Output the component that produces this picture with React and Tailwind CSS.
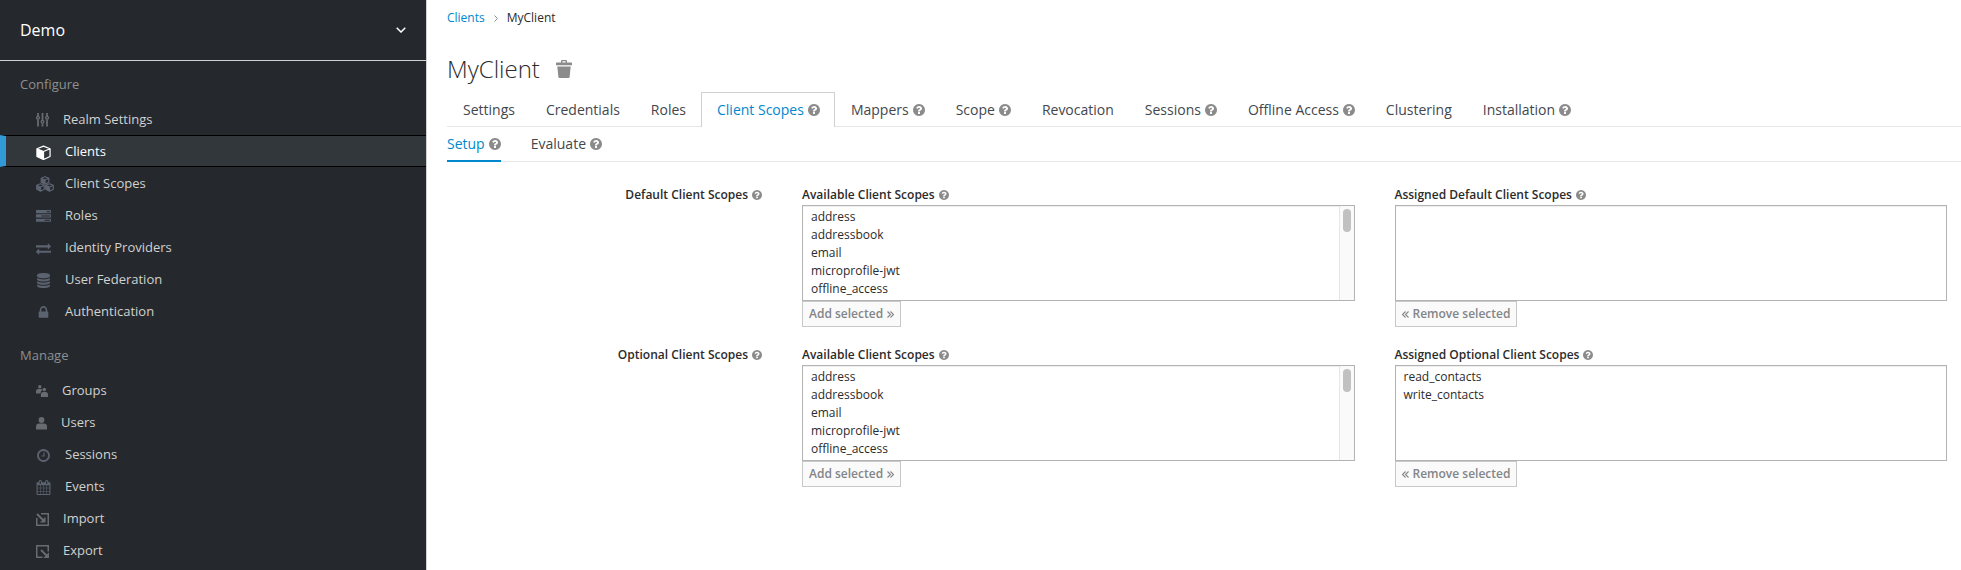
import React, { useState } from "react";

const paths = {
  lock: "M640 768h512v-192q0-106-75-181t-181-75-181 75-75 181v192zm832 96v576q0 40-28 68t-68 28h-960q-40 0-68-28t-28-68v-576q0-40 28-68t68-28h32v-192q0-184 132-316t316-132 316 132 132 316v192h32q40 0 68 28t28 68z",
  question:
    "M1024 1376v-192q0-14-9-23t-23-9h-192q-14 0-23 9t-9 23v192q0 14 9 23t23 9h192q14 0 23-9t9-23zm256-672q0-88-55.5-163t-138.5-116-170-41q-243 0-371 213-15 24 8 42l132 100q7 6 19 6 16 0 25-12 53-68 86-92 34-24 86-24 48 0 85.5 26t37.5 59q0 38-20 61t-68 45q-63 28-115.5 86.5t-52.5 125.5v36q0 14 9 23t23 9h192q14 0 23-9t9-23q0-19 21.5-49.5t54.5-49.5q32-18 49-28.5t46-35 44.5-48 28-60.5 12.5-81zm384 192q0 209-103 385.5t-279.5 279.5-385.5 103-385.5-103-279.5-279.5-103-385.5 103-385.5 279.5-279.5 385.5-103 385.5 103 279.5 279.5 103 385.5z",
  database:
    "M896 768q237 0 443-43t325-127v170q0 69-103 128t-280 93.5-385 34.5-385-34.5-280-93.5-103-128v-170q119 84 325 127t443 43zm0 768q237 0 443-43t325-127v170q0 69-103 128t-280 93.5-385 34.5-385-34.5-280-93.5-103-128v-170q119 84 325 127t443 43zm0-384q237 0 443-43t325-127v170q0 69-103 128t-280 93.5-385 34.5-385-34.5-280-93.5-103-128v-170q119 84 325 127t443 43zm0-1152q208 0 385 34.5t280 93.5 103 128v128q0 69-103 128t-280 93.5-385 34.5-385-34.5-280-93.5-103-128v-128q0-69 103-128t280-93.5 385-34.5z",
  clock:
    "M1024 544v448q0 14-9 23t-23 9h-320q-14 0-23-9t-9-23v-64q0-14 9-23t23-9h224v-352q0-14 9-23t23-9h64q14 0 23 9t9 23zm416 352q0-148-73-273t-198-198-273-73-273 73-198 198-73 273 73 273 198 198 273 73 273-73 198-198 73-273zm224 0q0 209-103 385.5t-279.5 279.5-385.5 103-385.5-103-279.5-279.5-103-385.5 103-385.5 279.5-279.5 385.5-103 385.5 103 279.5 279.5 103 385.5z",
  tasks:
    "M1024 1408h640v-128h-640v128zm-384-512h1024v-128h-1024v128zm640-512h384v-128h-384v128zm512 832v256q0 26-19 45t-45 19h-1664q-26 0-45-19t-19-45v-256q0-26 19-45t45-19h1664q26 0 45 19t19 45zm0-512v256q0 26-19 45t-45 19h-1664q-26 0-45-19t-19-45v-256q0-26 19-45t45-19h1664q26 0 45 19t19 45zm0-512v256q0 26-19 45t-45 19h-1664q-26 0-45-19t-19-45v-256q0-26 19-45t45-19h1664q26 0 45 19t19 45z",
  exchange:
    "M1792 1184v192q0 13-9.5 22.5t-22.5 9.5h-1376v192q0 13-9.5 22.5t-22.5 9.5q-12 0-24-10l-319-320q-9-9-9-22 0-14 9-23l320-320q9-9 23-9 13 0 22.5 9.5t9.5 22.5v192h1376q13 0 22.5 9.5t9.5 22.5zm0-544q0 14-9 23l-320 320q-9 9-23 9-13 0-22.5-9.5t-9.5-22.5v-192h-1376q-13 0-22.5-9.5t-9.5-22.5v-192q0-13 9.5-22.5t22.5-9.5h1376v-192q0-14 9-23t23-9q12 0 24 10l319 319q9 9 9 23z",
  calendar:
    "M192 1664h288v-288h-288v288zm352 0h320v-288h-320v288zm-352-352h288v-320h-288v320zm352 0h320v-320h-320v320zm-352-384h288v-288h-288v288zm736 736h320v-288h-320v288zm-384-736h320v-288h-320v288zm768 736h288v-288h-288v288zm-384-352h320v-320h-320v320zm-352-864v-288q0-13-9.5-22.5t-22.5-9.5h-64q-13 0-22.5 9.5t-9.5 22.5v288q0 13 9.5 22.5t22.5 9.5h64q13 0 22.5-9.5t9.5-22.5zm736 864h288v-320h-288v320zm-384-384h320v-288h-320v288zm384 0h288v-288h-288v288zm32-480v-288q0-13-9.5-22.5t-22.5-9.5h-64q-13 0-22.5 9.5t-9.5 22.5v288q0 13 9.5 22.5t22.5 9.5h64q13 0 22.5-9.5t9.5-22.5zm384-64v1280q0 52-38 90t-90 38h-1408q-52 0-90-38t-38-90v-1280q0-52 38-90t90-38h128v-96q0-66 47-113t113-47h64q66 0 113 47t47 113v96h384v-96q0-66 47-113t113-47h64q66 0 113 47t47 113v96h128q52 0 90 38t38 90z",
};

function Glyph({ name, className }) {
  return (
    <svg viewBox="0 0 1792 1792" fill="currentColor" className={className} aria-hidden="true">
      <path d={paths[name]} />
    </svg>
  );
}

function Help({ small }) {
  return (
    <svg
      viewBox="128 128 1536 1536"
      fill="currentColor"
      className={small ? "size-2.5 shrink-0 text-[#8b8b8b]" : "size-3 shrink-0 text-[#8b8b8b]"}
      aria-hidden="true"
    >
      <path d={paths.question} />
    </svg>
  );
}

function Cube() {
  return (
    <svg viewBox="0 0 16 16" className="size-[15px] shrink-0" aria-hidden="true">
      <path d="M1 4v8.200l7 3.300V7z" fill="currentColor" />
      <path d="M1 4l7-2.800L15 4v8.200l-7 3.300-7-3.300zM1 4l7 3 7-3M8 7v8.500" fill="none" stroke="currentColor" strokeWidth="1.300" strokeLinejoin="round" />
    </svg>
  );
}

function Cubes() {
  return (
    <svg viewBox="0 0 18 16" className="h-4 w-[18px] shrink-0" aria-hidden="true">
      {["translate(4.500 0)", "translate(0 7)", "translate(9 7)"].map((t) => (
        <g key={t} transform={t}>
          <path d="M.7 2.300v4l3.800 2v-4.300z" fill="currentColor" />
          <path d="M.7 2.300l3.800-1.600 3.800 1.600v4l-3.800 2-3.800-2zM.7 2.300l3.800 1.700 3.800-1.700M4.500 4v4.300" fill="none" stroke="currentColor" strokeWidth="1.200" strokeLinejoin="round" />
        </g>
      ))}
    </svg>
  );
}

function Sliders() {
  return (
    <svg viewBox="0 0 13 14" className="h-3.5 w-[13px]" fill="none" stroke="currentColor" strokeWidth="1.300" aria-hidden="true">
      <path d="M2 0v3.200M2 6.500v7M6.500 0v7.200M6.500 10.500v3M11 0v3.200M11 6.500v7" strokeWidth="1.800" />
      <circle cx="2" cy="4.800" r="1.400" />
      <circle cx="6.500" cy="8.800" r="1.400" />
      <circle cx="11" cy="4.800" r="1.400" />
    </svg>
  );
}

function Groups() {
  return (
    <svg viewBox="0 0 12 12" className="size-3" fill="currentColor" aria-hidden="true">
      <circle cx="3.800" cy="1.700" r="1.700" />
      <path d="M0 8.500V6.200Q0 4 2.200 4h2.600q1 0 1.600.7Q4.500 6.200 4.500 8.500z" />
      <circle cx="8.300" cy="4.600" r="1.800" />
      <path d="M4.900 12V9.600Q4.900 7 7.200 7h2.400Q12 7 12 9.600V12z" />
    </svg>
  );
}

function User() {
  return (
    <svg viewBox="0 0 11 13" className="h-[13px] w-[11px]" fill="currentColor" aria-hidden="true">
      <circle cx="5.500" cy="3" r="2.900" />
      <path d="M0 12.500V9.800Q0 6.500 3.300 6.500h4.400Q11 6.500 11 9.800v2.700z" />
    </svg>
  );
}

function Import() {
  return (
    <svg viewBox="0 0 13 13" className="size-[13px]" fill="none" stroke="currentColor" strokeWidth="1.500" aria-hidden="true">
      <path d="M5 .75h7.250v11.500H.75V5" />
      <path d="M1 1l6.500 6.500" strokeWidth="1.900" />
      <path d="M9.500 3.800v5.700H3.800z" fill="currentColor" stroke="none" />
    </svg>
  );
}

function Export() {
  return (
    <svg viewBox="0 0 13 13" className="size-[13px]" fill="none" stroke="currentColor" strokeWidth="1.500" aria-hidden="true">
      <path d="M12.250 6.500V.75H.75v11.500H6.500" />
      <path d="M5 5l6 6" strokeWidth="1.900" />
      <path d="M13 7.300V13H7.300z" fill="currentColor" stroke="none" />
    </svg>
  );
}

function Trash() {
  return (
    <svg viewBox="0 0 16 18" className="h-[18px] w-4" fill="currentColor" aria-hidden="true">
      <path d="M5 2.500V.9Q5 0 6 0h4q1 0 1 .9v1.600h4.500q.5 0 .5.500v2.200H0V3q0-.5.500-.5zM6.400 2.500h3.200V1.300H6.400z" />
      <path d="M1.300 6.500h13.400L13.600 17q-.1 1-1.100 1h-9q-1 0-1.100-1z" />
    </svg>
  );
}

function DoubleAngle({ left }) {
  return (
    <svg viewBox="0 0 7 7" className="size-[7px]" fill="none" stroke="currentColor" strokeWidth="1.100" aria-hidden="true">
      <path d={left ? "M3.500.5l-3 3 3 3M6.500.5l-3 3 3 3" : "M.5.5l3 3-3 3M3.500.5l3 3-3 3"} />
    </svg>
  );
}

const wide = (node) => <span className="flex w-[15px]">{node}</span>;

const configure = [
  { label: "Realm Settings", icon: <Sliders /> },
  { label: "Clients", icon: wide(<Cube />), active: true },
  { label: "Client Scopes", icon: wide(<Cubes />), cool: true },
  { label: "Roles", icon: wide(<Glyph name="tasks" className="size-[15px]" />), cool: true },
  { label: "Identity Providers", icon: wide(<Glyph name="exchange" className="size-[15px]" />), cool: true },
  { label: "User Federation", icon: wide(<Glyph name="database" className="size-[15px]" />), cool: true },
  { label: "Authentication", icon: wide(<Glyph name="lock" className="size-[15px]" />), cool: true },
];

const manage = [
  { label: "Groups", icon: <Groups /> },
  { label: "Users", icon: <User /> },
  { label: "Sessions", icon: wide(<Glyph name="clock" className="size-[15px]" />), cool: true },
  { label: "Events", icon: wide(<Glyph name="calendar" className="size-[15px]" />), cool: true },
  { label: "Import", icon: <Import /> },
  { label: "Export", icon: <Export /> },
];

function NavSection({ title, items, className }) {
  return (
    <section className={className}>
      <h2 className="px-5 pb-[7px] text-[13px] leading-6 text-[#8d8f91]">{title}</h2>
      <ul>
        {items.map((item) => (
          <li key={item.label}>
            <a
              href="#"
              aria-current={item.active ? "page" : undefined}
              className={
                item.active
                  ? "flex h-8 items-center gap-3.5 border-y border-l-6 border-y-black border-l-[#3399d6] bg-[#32373b] pt-0.5 pl-[30px] text-[13px] font-medium text-white"
                  : "flex h-8 items-center gap-3.5 pt-0.5 pl-9 text-[13px] font-medium text-[#d1d1d1]"
              }
            >
              <span className={item.active ? "text-white" : item.cool ? "text-[#5c6370]" : "text-[#696b6e]"}>{item.icon}</span>
              {item.label}
            </a>
          </li>
        ))}
      </ul>
    </section>
  );
}

const tabs = [
  ["Settings"],
  ["Credentials"],
  ["Roles"],
  ["Client Scopes", true],
  ["Mappers", true],
  ["Scope", true],
  ["Revocation"],
  ["Sessions", true],
  ["Offline Access", true],
  ["Clustering"],
  ["Installation", true],
];

const scopes = [
  "address", "addressbook", "email", "microprofile-jwt", "offline_access",
  "openid", "phone", "profile", "read_calendar", "read_files",
  "read_mail", "read_tasks", "roles", "web-origins", "write_calendar",
  "write_files", "write_mail", "write_tasks",
];

function ScopeList({ id, label, options, remove }) {
  const [progress, setProgress] = useState(0);
  const scrolls = options.length > 5;
  const onScroll = (e) => {
    const { scrollTop, scrollHeight, clientHeight } = e.currentTarget;
    setProgress(scrollTop / Math.max(1, scrollHeight - clientHeight));
  };
  return (
    <div className="flex min-w-0 flex-col items-start">
      <label htmlFor={id} className="mb-px flex items-center gap-1 text-xs leading-[18px] font-semibold">
        {label}
        <Help small />
      </label>
      <div className="relative w-full">
        <select
          id={id}
          multiple
          size={5}
          onScroll={onScroll}
          className="block h-24 w-full appearance-none border border-[#b3b3b3] bg-white py-0.5 text-xs text-[#2b2b2b] shadow-[inset_0_1px_1px_rgba(0,0,0,0.075)] outline-none [scrollbar-width:none]"
        >
          {options.map((o) => (
            <option key={o} className="h-[18px] px-2 py-0 leading-[18px]">{o}</option>
          ))}
        </select>
        {scrolls && (
          <span className="pointer-events-none absolute inset-y-px right-px w-[15px] border-l border-[#e6e6e6] bg-[#fafafa]" aria-hidden="true">
            <span
              className="absolute right-[3px] h-[23px] w-2 rounded-full bg-[#c1c1c1]"
              style={{ top: 3 + progress * 65 }}
            />
          </span>
        )}
      </div>
      <button type="button" disabled className="flex h-[26px] items-center gap-1 border border-[#c8c8c8] bg-[#fafafa] px-1.5 text-xs font-semibold text-[#838587]">
        {remove ? (
          <>
            <DoubleAngle left />
            Remove selected
          </>
        ) : (
          <>
            Add selected
            <DoubleAngle />
          </>
        )}
      </button>
    </div>
  );
}

function ScopeRow({ label, name, assigned }) {
  return (
    <div className="grid grid-cols-[315px_1fr_1fr] gap-x-10">
      <div className="flex items-center justify-end gap-1 self-start text-xs leading-[18px] font-semibold">
        {label}
        <Help small />
      </div>
      <ScopeList id={name + "-available"} label="Available Client Scopes" options={scopes} />
      <ScopeList id={name + "-assigned"} label={"Assigned " + label} options={assigned} remove />
    </div>
  );
}

export default function App() {
  return (
    <div className="flex min-h-screen bg-white font-['Open_Sans',sans-serif] text-[#2b2b2b]">
      <aside className="w-[427px] shrink-0 border-r border-[#d1d1d1] bg-[#25292d]">
        <button type="button" className="flex h-[61px] w-full items-center justify-between border-b border-[#d1d1d1] px-5 text-base text-white">
          Demo
          <svg viewBox="0 0 10 6" className="h-1.5 w-2.5" fill="none" stroke="currentColor" strokeWidth="1.500" aria-hidden="true">
            <path d="M.7.7L5 5 9.300.7" />
          </svg>
        </button>
        <nav>
          <NavSection title="Configure" items={configure} className="pt-[11px]" />
          <NavSection title="Manage" items={manage} className="pt-4" />
        </nav>
      </aside>
      <main className="min-w-0 flex-1 pl-5">
        <nav aria-label="Breadcrumb" className="flex items-center gap-[9px] pt-[9px] text-xs leading-[18px]">
          <a href="#" className="text-[#0088ce]">Clients</a>
          <svg viewBox="0 0 4 7" className="h-[7px] w-1" fill="none" stroke="#8b8d8f" strokeWidth="1" aria-hidden="true">
            <path d="M.5.5l3 3-3 3" />
          </svg>
          <span>MyClient</span>
        </nav>
        <div className="mt-[26px] flex items-center gap-4">
          <h1 className="text-2xl leading-8 font-light">MyClient</h1>
          <button type="button" aria-label="Delete client" className="text-[#8b8b8b]">
            <Trash />
          </button>
        </div>
        <ul className="mt-[7px] flex border-b border-[#e6e6e6]">
          {tabs.map(([label, help]) => (
            <li key={label}>
              <a
                href="#"
                className={
                  label === "Client Scopes"
                    ? "-mb-px flex h-[35px] items-center gap-1 border border-b-0 border-[#d1d1d1] bg-white pr-3.5 pl-[15px] text-sm text-[#0088ce]"
                    : "-mb-px flex h-[35px] items-center gap-1 border border-b-0 border-transparent pr-3.5 pl-[15px] text-sm text-[#43474d]"
                }
              >
                {label}
                {help && <Help />}
              </a>
            </li>
          ))}
        </ul>
        <ul className="flex h-[35px] gap-[30px] border-b border-[#e6e6e6] text-sm">
          <li>
            <a href="#" className="flex h-[35px] items-center gap-1 border-b-2 border-[#0088ce] text-[#0088ce]">
              Setup
              <Help />
            </a>
          </li>
          <li>
            <a href="#" className="flex h-[35px] items-center gap-1 border-b-2 border-transparent text-[#43474d]">
              Evaluate
              <Help />
            </a>
          </li>
        </ul>
        <form className="flex flex-col gap-[19px] pt-6 pr-3.5">
          <ScopeRow label="Default Client Scopes" name="default" assigned={[]} />
          <ScopeRow label="Optional Client Scopes" name="optional" assigned={["read_contacts", "write_contacts"]} />
        </form>
      </main>
    </div>
  );
}
